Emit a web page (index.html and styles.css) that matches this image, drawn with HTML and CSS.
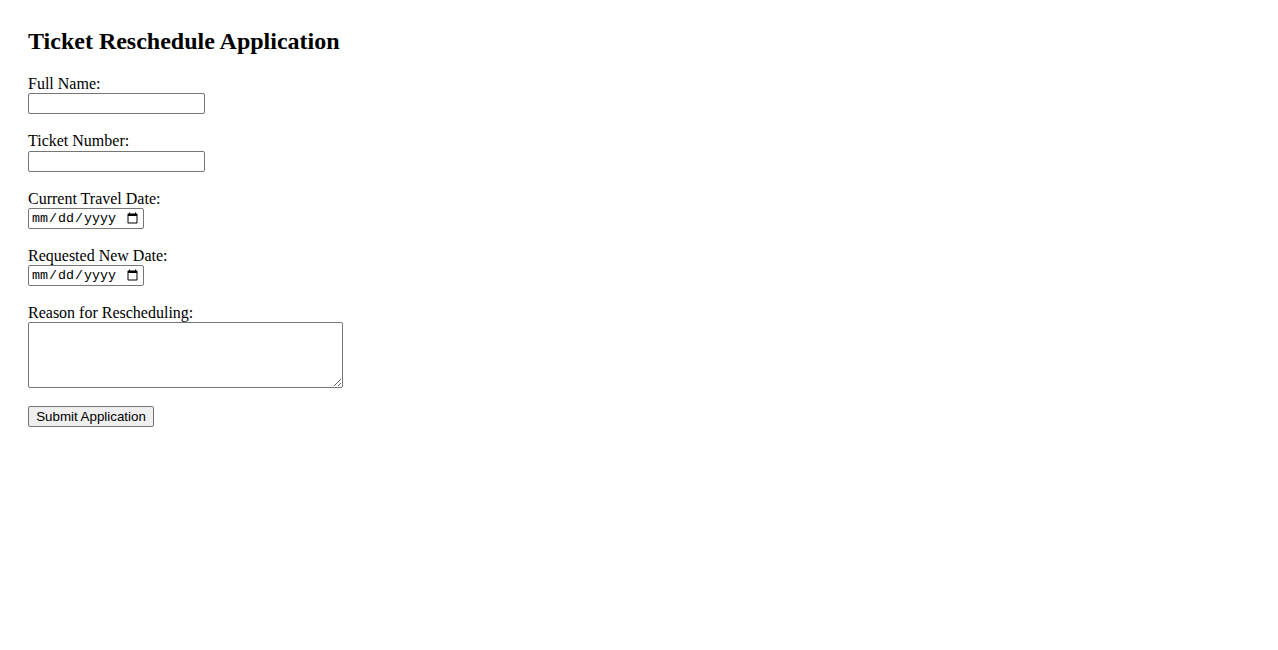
FILE: index.html
```html
<!DOCTYPE html>
<html lang="en">
<head>
<meta charset="utf-8">
<title>Ticket Reschedule Application</title>
<link rel="stylesheet" href="styles.css">
</head>
<body>
<h2 class="title">Ticket Reschedule Application</h2>
<form class="form">
  <label class="label" for="fullName">Full Name:</label>
  <input class="field text-field" type="text" id="fullName">
  <label class="label" for="ticket">Ticket Number:</label>
  <input class="field text-field" type="text" id="ticket">
  <label class="label" for="current">Current Travel Date:</label>
  <input class="field date-field" type="date" id="current">
  <label class="label" for="requested">Requested New Date:</label>
  <input class="field date-field" type="date" id="requested">
  <label class="label" for="reason">Reason for Rescheduling:</label>
  <textarea class="field area-field" id="reason"></textarea>
  <button class="submit" type="submit">Submit Application</button>
</form>
</body>
</html>
```
FILE: styles.css
```css
body {
  margin: 8px;
  padding: 20px;
  font-family: "Liberation Serif", "Times New Roman", serif;
  font-size: 16px;
  color: #000;
  background: #fff;
}

.title {
  margin: 0 0 20px 0;
  font-size: 24px;
  font-weight: bold;
}

.form {
  display: flex;
  flex-direction: column;
  align-items: flex-start;
}

.label {
  display: block;
  line-height: 18.25px;
}

.field {
  box-sizing: border-box;
  margin: 0 0 18px 0;
  border: 1px solid #767676;
  border-radius: 2px;
  background: #fff;
}

.text-field {
  width: 177px;
  height: 21px;
  padding: 1px 2px;
  font-family: "Liberation Sans", Arial, sans-serif;
  font-size: 13.333px;
}

.date-field {
  width: 116px;
  height: 21px;
  padding: 1px 2px;
  font-family: "Liberation Mono", "DejaVu Sans Mono", monospace;
  font-size: 13.333px;
}

.area-field {
  width: 315px;
  height: 66px;
  padding: 2px;
  margin-bottom: 18px;
  resize: both;
  font-family: "Liberation Mono", monospace;
  font-size: 13.333px;
}

.submit {
  box-sizing: border-box;
  width: 126px;
  height: 21px;
  padding: 1px 6px;
  font-family: "Liberation Sans", Arial, sans-serif;
  font-size: 13.333px;
  color: #000;
  background: #efefef;
  border: 1px solid #767676;
  border-radius: 2px;
}
```
